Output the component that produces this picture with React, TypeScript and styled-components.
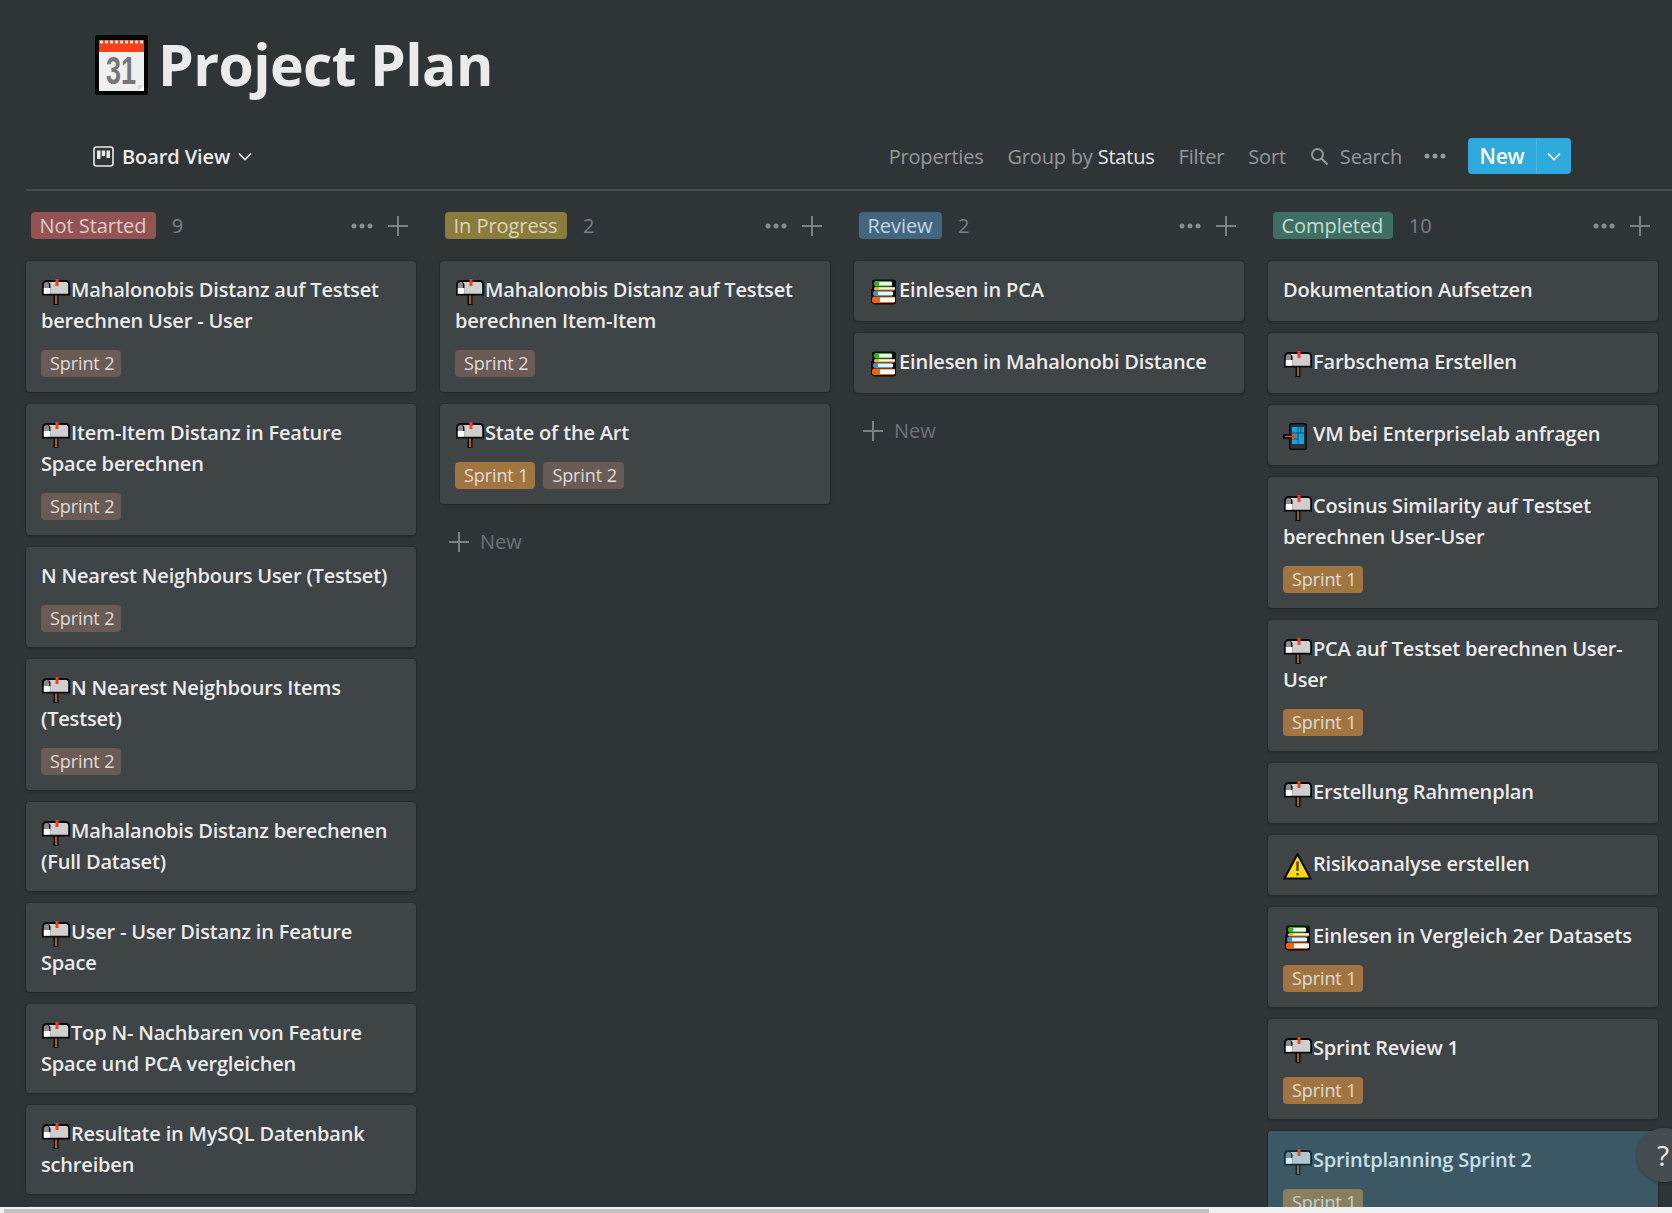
import React from "react";
import styled, { createGlobalStyle } from "styled-components";

const FONT = `"Open Sans", "Noto Sans", "Liberation Sans", sans-serif`;

const Global = createGlobalStyle`
  html, body { margin: 0; padding: 0; height: 100%; overflow: hidden; background: #2f3437; }
  #root { height: 100%; }
`;

const Page = styled.div`
  position: relative;
  height: 100vh;
  display: flex;
  flex-direction: column;
  overflow: hidden;
  background: #2f3437;
  color: #ebebeb;
  font-family: ${FONT};
`;

const Content = styled.div`
  flex: 1;
  min-height: 0;
  overflow: hidden;
`;

const TitleRow = styled.header`
  height: 130px;
  padding: 35px 0 0 95px;
  box-sizing: border-box;
  display: flex;
  align-items: flex-start;
  gap: 10px;
`;

const Title = styled.h1`
  margin: 0;
  font-size: 57px;
  line-height: 58px;
  font-weight: 700;
  color: #ebebeb;
  letter-spacing: -0.6px;
`;

const Toolbar = styled.nav`
  height: 61px;
  margin-left: 26px;
  box-sizing: border-box;
  padding: 8px 101px 15px 67px;
  border-bottom: 2px solid #474c4f;
  display: flex;
  align-items: center;
  justify-content: space-between;
`;

const ViewSwitch = styled.div`
  display: flex;
  align-items: center;
  font-size: 20px;
  font-weight: 600;
  color: #ebebeb;
  letter-spacing: -0.1px;
  gap: 8px;
`;

const Actions = styled.div`
  display: flex;
  align-items: center;
  gap: 24px;
  font-size: 20px;
  color: #96989a;
  letter-spacing: -0.2px;
`;

const Strong = styled.span`
  color: #e8e8e8;
`;

const SearchAction = styled.span`
  display: inline-flex;
  align-items: center;
  gap: 11px;
`;

const MoreAction = styled.span`
  display: flex;
  margin: 0 -2px;
`;

const NewButton = styled.div`
  width: 103px;
  height: 36px;
  display: flex;
  border-radius: 4px;
  background: #2eaadc;
  color: #fff;
  font-weight: 600;
  font-size: 21px;
  overflow: hidden;
`;

const NewLabel = styled.span`
  width: 68px;
  display: flex;
  align-items: center;
  justify-content: center;
  border-right: 1px solid #4cb6e0;
`;

const NewCaret = styled.span`
  flex: 1;
  display: flex;
  align-items: center;
  justify-content: center;
`;

const Board = styled.main`
  margin-left: 26px;
  display: grid;
  grid-template-columns: repeat(4, 390px);
  column-gap: 24px;
  align-items: start;
`;

const Column = styled.section`
  display: flex;
  flex-direction: column;
`;

const ColumnHead = styled.div`
  height: 70px;
  box-sizing: border-box;
  padding: 21px 8px 0 5px;
  display: flex;
  align-items: flex-start;
`;

const Pill = styled.span<{ $bg: string; $fg: string }>`
  height: 27px;
  line-height: 27px;
  padding: 0 9.5px 0 8.5px;
  border-radius: 4px;
  background: ${(p) => p.$bg};
  color: ${(p) => p.$fg};
  font-size: 20px;
  letter-spacing: -0.05px;
`;

const Count = styled.span`
  margin-left: 16px;
  height: 27px;
  line-height: 27px;
  font-size: 20px;
  color: #7d8083;
`;

const HeadTools = styled.span`
  margin-left: auto;
  height: 27px;
  display: flex;
  align-items: center;
  gap: 15px;
`;

const CardList = styled.div`
  display: flex;
  flex-direction: column;
  gap: 12px;
`;

const Card = styled.article<{ $selected?: boolean; $bottom: number }>`
  position: relative;
  padding: 13px 15px ${(p) => p.$bottom}px;
  border-radius: 4px;
  background: #3f4447;
  box-shadow: 0 1px 3px rgba(15, 15, 15, 0.3), 0 0 0 1px rgba(15, 15, 15, 0.12);
  overflow: hidden;
  ${(p) =>
    p.$selected &&
    `&::after {
      content: "";
      position: absolute;
      inset: 0;
      background: rgba(46, 170, 220, 0.2);
    }`}
`;

const CardTitle = styled.div`
  font-size: 20px;
  line-height: 31px;
  font-weight: 600;
  color: #ebebeb;
  white-space: pre;
  letter-spacing: -0.18px;
`;

const EmojiBox = styled.span`
  display: inline-block;
  width: 30px;
  height: 28px;
  vertical-align: -7px;
  & > svg { display: block; margin-top: 3px; }
`;

const Tags = styled.div`
  margin-top: 14px;
  display: flex;
  gap: 8px;
`;

const Tag = styled.span<{ $bg: string }>`
  height: 27px;
  line-height: 27px;
  padding: 0 7px 0 9px;
  border-radius: 4px;
  background: ${(p) => p.$bg};
  color: #e0dcd8;
  font-size: 18px;
  letter-spacing: -0.1px;
`;

const AddRow = styled.div`
  margin-top: 24px;
  padding-left: 9px;
  display: flex;
  align-items: center;
  gap: 11px;
  font-size: 20px;
  line-height: 27px;
  color: #6f7376;
`;

const ScrollTrack = styled.div`
  flex: none;
  height: 6px;
  padding: 2px 0 0 4px;
  box-sizing: border-box;
  background: #f1f1f1;
`;

const ScrollThumb = styled.div`
  width: 1205px;
  height: 4px;
  background: #c1c1c1;
`;

const HelpButton = styled.div`
  position: absolute;
  left: 1637px;
  top: 1128px;
  width: 54px;
  height: 54px;
  border-radius: 50%;
  background: #474c50;
  box-shadow: 0 1px 3px rgba(15, 15, 15, 0.4);
  color: #ebebeb;
  font-size: 28px;
  line-height: 54px;
  padding-left: 20px;
  box-sizing: border-box;
`;

const Calendar = () => (
  <svg width="53" height="60" viewBox="0 0 53 60">
    <rect x="0" y="0" width="53" height="60" rx="2" fill="#060606" />
    <rect x="4" y="5" width="45" height="51" fill="#f0f0f0" />
    <rect x="4" y="5" width="45" height="12" fill="#f5401a" />
    {Array.from({ length: 9 }).map((_, i) => (
      <circle key={i} cx={6.5 + i * 5} cy={7} r={1.7} fill="#f6e4de" />
    ))}
    <text
      x="11"
      y="49"
      fontFamily="'Liberation Sans', sans-serif"
      fontSize="38"
      fontWeight="700"
      fill="#777"
      textLength="30"
      lengthAdjust="spacingAndGlyphs"
    >
      31
    </text>
    <path d="M43 56 L49 50 L49 56 Z" fill="#fff" />
    <path d="M43 56 L49 50 L43 50 Z" fill="#dcdcdc" />
  </svg>
);

const Mailbox = () => (
  <svg width="30" height="28" viewBox="0 0 30 28">
    <rect x="12.5" y="15" width="5" height="11" fill="#0a0a0a" />
    <rect x="14" y="16" width="2.2" height="9" fill="#a4592c" />
    <path d="M6 1 H25 Q29 1 29 6 V16.5 H1 V6 Q1 1 6 1 Z" fill="#0a0a0a" />
    <path d="M6 3 H25 Q27.2 3 27.2 6 V14.7 H9.5 V6 Q9.5 3 6 3 Z" fill="#cfcfcf" />
    <path d="M6 3 Q8 3 8 6 V14.7 H2.8 V6 Q2.8 3 6 3 Z" fill="#8c8c8c" />
    <rect x="2.8" y="9" width="6.7" height="5.7" fill="#fff" />
    <rect x="14.5" y="0" width="3" height="7" fill="#f5401a" />
  </svg>
);

const Books = () => (
  <svg width="30" height="28" viewBox="0 0 30 28">
    <rect x="3" y="0.5" width="24" height="25" rx="2" fill="#0a0a0a" />
    <rect x="2" y="10" width="8" height="14" fill="#0a0a0a" />
    <rect x="5" y="2" width="18" height="5.5" rx="2" fill="#2cb52c" />
    <rect x="10" y="3" width="13" height="3.5" fill="#f2f2f2" />
    <rect x="5" y="8" width="21" height="3.5" rx="1.5" fill="#f2b01e" />
    <rect x="10" y="8.5" width="16" height="1.7" fill="#f2f2f2" />
    <rect x="4" y="12" width="20" height="5" rx="2" fill="#3b93e0" />
    <rect x="9" y="12.8" width="15" height="3.3" fill="#f2f2f2" />
    <rect x="3" y="17.5" width="23" height="6.5" rx="2.5" fill="#f2640f" />
    <rect x="11" y="18.5" width="15" height="4.5" fill="#f7f7f7" />
  </svg>
);

const Phone = () => (
  <svg width="30" height="28" viewBox="0 0 30 28">
    <rect x="6" y="0" width="18" height="27" rx="2.5" fill="#0a0a0a" />
    <rect x="7.5" y="1.5" width="15" height="24" rx="1" fill="#2d3134" />
    <rect x="9" y="4" width="12" height="17" fill="#12a5e6" />
    <path d="M15 4 V21 M9 10 H21 M18 4 V10 M9 16 H15" stroke="#073b52" strokeWidth="0.8" />
    <rect x="0" y="11" width="9" height="5" fill="#0a0a0a" />
    <path d="M2 13.5 H12 M9 10.8 L12.5 13.5 L9 16.2" stroke="#f5401a" strokeWidth="1.6" fill="none" />
  </svg>
);

const Warning = () => (
  <svg width="30" height="28" viewBox="0 0 30 28">
    <path d="M14.5 1 L27.5 25.5 H1.5 Z" fill="#ffdc00" stroke="#0a0a0a" strokeWidth="2" strokeLinejoin="miter" />
    <rect x="13.4" y="8.5" width="2.2" height="9.5" fill="#3a3a1a" />
    <rect x="13.4" y="20" width="2.2" height="2.4" fill="#3a3a1a" />
  </svg>
);

const BoardIcon = () => (
  <svg width="21" height="21" viewBox="0 0 21 21" fill="none">
    <rect x="1" y="1" width="19" height="19" rx="2.5" stroke="#ebebeb" strokeWidth="1.6" />
    <path d="M4 4.5 H7.5 V13 H4 Z M8.8 4.5 H12.2 V10 H8.8 Z M13.5 4.5 H17 V12 H13.5 Z" fill="#ebebeb" />
  </svg>
);

const Chevron = ({ color = "#ebebeb" }: { color?: string }) => (
  <svg width="14" height="9" viewBox="0 0 14 9" fill="none">
    <path d="M1 1.5 L7 7.5 L13 1.5" stroke={color} strokeWidth="1.6" />
  </svg>
);

const SearchIcon = () => (
  <svg width="19" height="19" viewBox="0 0 19 19" fill="none">
    <circle cx="7.5" cy="7.5" r="5.5" stroke="#96989a" strokeWidth="2" />
    <path d="M11.5 11.5 L17.5 17.5" stroke="#96989a" strokeWidth="2.2" />
  </svg>
);

const Dots = ({ color = "#8a8d90" }: { color?: string }) => (
  <svg width="22" height="6" viewBox="0 0 22 6">
    <circle cx="3" cy="3" r="2.5" fill={color} />
    <circle cx="11" cy="3" r="2.5" fill={color} />
    <circle cx="19" cy="3" r="2.5" fill={color} />
  </svg>
);

const Plus = () => (
  <svg width="20" height="20" viewBox="0 0 20 20">
    <path d="M0 10 H20 M10 0 V20" stroke="#7e8183" strokeWidth="2" />
  </svg>
);

const ICONS = { mail: Mailbox, books: Books, phone: Phone, warn: Warning };
type IconKey = keyof typeof ICONS;
type CardData = { icon?: IconKey; title: string; tags?: (1 | 2)[]; selected?: boolean };
type ColumnData = {
  name: string;
  bg: string;
  fg: string;
  count: number;
  add?: boolean;
  cards: CardData[];
};

const TAG_BG = { 1: "#a0753f", 2: "#6b5b56" };

const COLUMNS: ColumnData[] = [
  {
    name: "Not Started",
    bg: "#945353",
    fg: "#dccccb",
    count: 9,
    cards: [
      { icon: "mail", title: "Mahalonobis Distanz auf Testset\nberechnen User - User", tags: [2] },
      { icon: "mail", title: "Item-Item Distanz in Feature\nSpace berechnen", tags: [2] },
      { title: "N Nearest Neighbours User (Testset)", tags: [2] },
      { icon: "mail", title: "N Nearest Neighbours Items\n(Testset)", tags: [2] },
      { icon: "mail", title: "Mahalanobis Distanz berechenen\n(Full Dataset)" },
      { icon: "mail", title: "User - User Distanz in Feature\nSpace" },
      { icon: "mail", title: "Top N- Nachbaren von Feature\nSpace und PCA vergleichen" },
      { icon: "mail", title: "Resultate in MySQL Datenbank\nschreiben" },
      { title: "" },
    ],
  },
  {
    name: "In Progress",
    bg: "#8a7c3c",
    fg: "#dcd6b8",
    count: 2,
    add: true,
    cards: [
      { icon: "mail", title: "Mahalonobis Distanz auf Testset\nberechnen Item-Item", tags: [2] },
      { icon: "mail", title: "State of the Art", tags: [1, 2] },
    ],
  },
  {
    name: "Review",
    bg: "#42667f",
    fg: "#c4d6e0",
    count: 2,
    add: true,
    cards: [
      { icon: "books", title: "Einlesen in PCA" },
      { icon: "books", title: "Einlesen in Mahalonobi Distance" },
    ],
  },
  {
    name: "Completed",
    bg: "#3f6f63",
    fg: "#c6dcd4",
    count: 10,
    cards: [
      { title: "Dokumentation Aufsetzen" },
      { icon: "mail", title: "Farbschema Erstellen" },
      { icon: "phone", title: "VM bei Enterpriselab anfragen" },
      { icon: "mail", title: "Cosinus Similarity auf Testset\nberechnen User-User", tags: [1] },
      { icon: "mail", title: "PCA auf Testset berechnen User-\nUser", tags: [1] },
      { icon: "mail", title: "Erstellung Rahmenplan" },
      { icon: "warn", title: "Risikoanalyse erstellen" },
      { icon: "books", title: "Einlesen in Vergleich 2er Datasets", tags: [1] },
      { icon: "mail", title: "Sprint Review 1", tags: [1] },
      { icon: "mail", title: "Sprintplanning Sprint 2", tags: [1], selected: true },
    ],
  },
];

const TaskCard = ({ card }: { card: CardData }) => {
  const Icon = card.icon ? ICONS[card.icon] : null;
  const bottom = card.tags ? 15 : card.title.includes("\n") ? 14 : 16;
  return (
    <Card $selected={card.selected} $bottom={bottom}>
      <CardTitle>
        {Icon && (
          <EmojiBox>
            <Icon />
          </EmojiBox>
        )}
        {card.title}
      </CardTitle>
      {card.tags && (
        <Tags>
          {card.tags.map((t) => (
            <Tag key={t} $bg={TAG_BG[t]}>
              Sprint {t}
            </Tag>
          ))}
        </Tags>
      )}
    </Card>
  );
};

export default function App() {
  return (
    <Page>
      <Global />
      <Content>
        <TitleRow>
          <Calendar />
          <Title>Project Plan</Title>
        </TitleRow>
        <Toolbar>
          <ViewSwitch>
            <BoardIcon />
            <span>Board View</span>
            <Chevron />
          </ViewSwitch>
          <Actions>
            <span>Properties</span>
            <span>
              Group by <Strong>Status</Strong>
            </span>
            <span>Filter</span>
            <span>Sort</span>
            <SearchAction>
              <SearchIcon />
              Search
            </SearchAction>
            <MoreAction>
              <Dots color="#96989a" />
            </MoreAction>
            <NewButton>
              <NewLabel>New</NewLabel>
              <NewCaret>
                <Chevron color="#fff" />
              </NewCaret>
            </NewButton>
          </Actions>
        </Toolbar>
        <Board>
          {COLUMNS.map((col) => (
            <Column key={col.name}>
              <ColumnHead>
                <Pill $bg={col.bg} $fg={col.fg}>
                  {col.name}
                </Pill>
                <Count>{col.count}</Count>
                <HeadTools>
                  <Dots />
                  <Plus />
                </HeadTools>
              </ColumnHead>
              <CardList>
                {col.cards.map((c, i) => (
                  <TaskCard key={i} card={c} />
                ))}
              </CardList>
              {col.add && (
                <AddRow>
                  <Plus />
                  New
                </AddRow>
              )}
            </Column>
          ))}
        </Board>
      </Content>
      <ScrollTrack>
        <ScrollThumb />
      </ScrollTrack>
      <HelpButton>?</HelpButton>
    </Page>
  );
}
